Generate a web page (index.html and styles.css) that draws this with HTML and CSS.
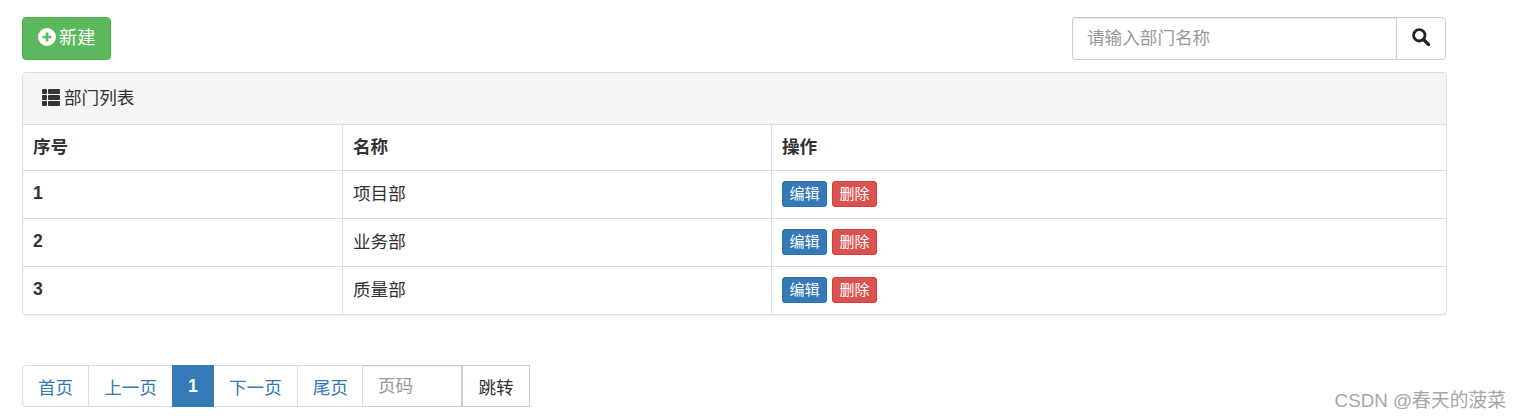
FILE: index.html
```html
<!DOCTYPE html>
<html lang="zh-CN">
<head>
<meta charset="utf-8">
<title>部门列表</title>
<link rel="stylesheet" href="styles.css">
</head>
<body>
<div class="page">
  <div class="toolbar">
    <a class="btn-new">
      <svg class="ico-plus" viewBox="0 0 18 18"><path fill="#fff" fill-rule="evenodd" d="M9 0a9 9 0 1 0 0 18A9 9 0 0 0 9 0zM7.700 4.500h2.600v3.200h3.200v2.600h-3.200v3.200H7.700v-3.200H4.500V7.700h3.200z"/></svg>
      <span class="btn-label">新建</span>
    </a>
    <div class="search">
      <input class="search-input" placeholder="请输入部门名称">
      <button class="search-btn" aria-label="搜索">
        <svg class="ico-search" viewBox="0 0 18 18"><circle cx="7.300" cy="7.300" r="5.700" fill="none" stroke="#222" stroke-width="2.800"/><path d="M11.500 11.500l5 5" stroke="#222" stroke-width="3.200" stroke-linecap="round"/></svg>
      </button>
    </div>
  </div>
  <div class="panel">
    <div class="panel-heading">
      <svg class="ico-list" viewBox="0 0 18 17"><path fill="#333" d="M0 1A1 1 0 0 1 1 0h3a1 1 0 0 1 1 1v3a1 1 0 0 1-1 1H1a1 1 0 0 1-1-1zM6 1a1 1 0 0 1 1-1h10a1 1 0 0 1 1 1v3a1 1 0 0 1-1 1H7a1 1 0 0 1-1-1zM0 7a1 1 0 0 1 1-1h3a1 1 0 0 1 1 1v3a1 1 0 0 1-1 1H1a1 1 0 0 1-1-1zM6 7a1 1 0 0 1 1-1h10a1 1 0 0 1 1 1v3a1 1 0 0 1-1 1H7a1 1 0 0 1-1-1zM0 13a1 1 0 0 1 1-1h3a1 1 0 0 1 1 1v3a1 1 0 0 1-1 1H1a1 1 0 0 1-1-1zM6 13a1 1 0 0 1 1-1h10a1 1 0 0 1 1 1v3a1 1 0 0 1-1 1H7a1 1 0 0 1-1-1z"/></svg>
      <span class="heading-label">部门列表</span>
    </div>
    <table class="data-table">
      <colgroup><col class="col-a"><col class="col-b"><col></colgroup>
      <thead>
        <tr><th>序号</th><th>名称</th><th>操作</th></tr>
      </thead>
      <tbody>
        <tr><th>1</th><td class="txt">项目部</td><td><a class="mini mini-blue">编辑</a><a class="mini mini-red">删除</a></td></tr>
        <tr><th>2</th><td class="txt">业务部</td><td><a class="mini mini-blue">编辑</a><a class="mini mini-red">删除</a></td></tr>
        <tr><th>3</th><td class="txt">质量部</td><td><a class="mini mini-blue">编辑</a><a class="mini mini-red">删除</a></td></tr>
      </tbody>
    </table>
  </div>
  <div class="pager">
    <a class="pg pg-first">首页</a>
    <a class="pg">上一页</a>
    <a class="pg pg-active">1</a>
    <a class="pg">下一页</a>
    <a class="pg">尾页</a>
    <input class="pg-input" placeholder="页码">
    <button class="pg-go">跳转</button>
  </div>
</div>
<div class="watermark">CSDN @春天的菠菜</div>
</body>
</html>
```
FILE: styles.css
```css
* { box-sizing: border-box; }
html, body { margin: 0; padding: 0; background: #fff; }
body {
  font-family: "Liberation Sans", "Noto Sans CJK SC", sans-serif;
  font-size: 17.6px;
  color: #333;
  height: 418px;
  overflow: hidden;
  position: relative;
}
.page { width: 1447px; padding: 17px 0 0 22px; }
.toolbar { display: flex; justify-content: space-between; align-items: flex-start; padding-right: 1px; margin-bottom: 12px; }
.btn-new {
  display: flex; align-items: center;
  width: 89px; height: 43px; padding-left: 15px;
  background: #5cb85c; border: 1px solid #4cae4c; border-radius: 4px;
  color: #fff; line-height: 24px;
}
.ico-plus { width: 18px; height: 18px; margin-right: 3px; margin-top: -4px; }
.btn-label { padding-bottom: 2px; font-size: 18.300px; }
.search { display: flex; width: 374px; height: 43px; }
.search-input {
  flex: 1; min-width: 0; height: 43px; padding: 0 15px 0 14px;
  border: 1px solid #ccc; border-right: 0; border-radius: 4px 0 0 4px;
  font: inherit; color: #555; outline: 0;
  box-shadow: inset 0 1px 1px rgba(0,0,0,.075);
}
.search-input::placeholder, .pg-input::placeholder { color: #999; opacity: 1; }
.search-btn {
  width: 50px; height: 43px; padding: 0;
  display: flex; align-items: center; justify-content: center;
  background: #fff; border: 1px solid #ccc; border-radius: 0 4px 4px 0;
}
.ico-search { width: 18px; height: 18px; margin-top: -3px; }
.panel {
  border: 1px solid #ddd; border-radius: 4px; background: #fff;
  box-shadow: 0 1px 1px rgba(0,0,0,.05);
  overflow: hidden;
  height: 243px;
}
.panel-heading {
  display: flex; align-items: center;
  height: 52px; padding-left: 19px;
  background: #f5f5f5; border-bottom: 1px solid #ddd;
}
.ico-list { width: 18px; height: 17px; margin-right: 4px; margin-top: -3px; }
.heading-label { padding-bottom: 4px; }
.data-table { width: 100%; border-collapse: collapse; table-layout: fixed; font-size: 17.6px; }
.col-a { width: 319.500px; }
.col-b { width: 429px; }
.data-table th, .data-table td {
  padding: 0 10px; text-align: left;
  border-left: 1px solid #ddd; border-bottom: 1px solid #ddd;
  vertical-align: middle;
}
.data-table th:first-child { border-left: 0; font-weight: 700; }
.data-table thead th { height: 45px; padding-bottom: 3px; }
.data-table tbody tr > * { height: 48px; }
.data-table tbody th { padding-bottom: 2px; }
.data-table .txt { padding-bottom: 4px; }
.data-table tbody tr:last-child > * { border-bottom: 0; }
.mini {
  display: inline-block; width: 45px; height: 26px;
  border-radius: 3px; border: 1px solid;
  font-size: 15px; line-height: 24px; text-align: center; color: #fff;
  vertical-align: middle; margin-right: 5px;
}
.mini-blue { background: #337ab7; border-color: #2e6da4; }
.mini-red { background: #d9534f; border-color: #d43f3a; }
.pager { display: flex; height: 42px; margin-top: 50px; }
.pg {
  display: flex; align-items: center; justify-content: center;
  padding: 0 15px; margin-left: -1px;
  background: #fff; border: 1px solid #ddd; color: #337ab7;
}
.pg-first { margin-left: 0; border-radius: 4px 0 0 4px; }
.pg-active { background: #337ab7; border-color: #337ab7; color: #fff; font-weight: 700; width: 42px; padding: 0; position: relative; }
.pg-input {
  width: 100px; height: 42px; padding: 0 15px; margin-left: -2px;
  border: 1px solid #ccc; border-left-color: #ddd; font: inherit; outline: 0;
  box-shadow: inset 0 1px 1px rgba(0,0,0,.075);
}
.pg-go {
  width: 68px; height: 42px; padding: 0; margin-left: 0;
  background: #fff; border: 1px solid #ccc; font: inherit; color: #333;
}
.watermark {
  position: absolute; right: 15px; bottom: 5px;
  font-size: 18.800px; line-height: 24px; color: #a6a6a6;
}
```
